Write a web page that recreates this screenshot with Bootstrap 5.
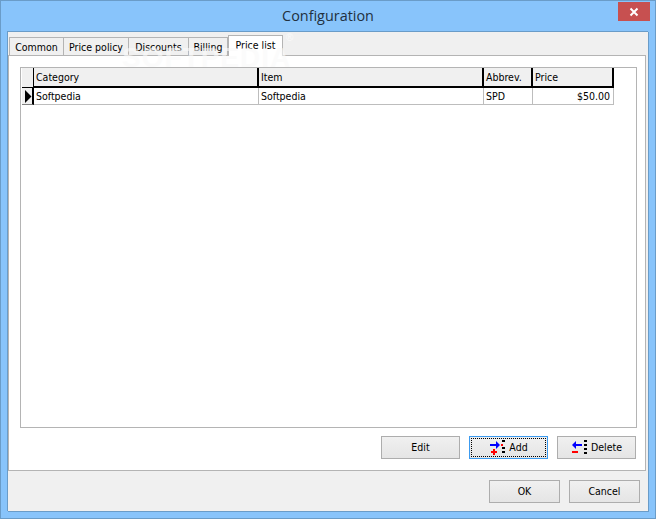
<!DOCTYPE html>
<html lang="en">
<head>
<meta charset="utf-8">
<title>Configuration</title>
<link href="https://cdn.jsdelivr.net/npm/bootstrap@5.3.0/dist/css/bootstrap.min.css" rel="stylesheet">
<style>
html,body{margin:0;height:519px;overflow:hidden;background:#88c4fb}
body{font-family:"DejaVu Sans Condensed","Liberation Sans",sans-serif;font-size:10.5px;color:#000}
.win{width:656px;height:519px;border:1px solid #6a9cc8;background:#88c4fb;position:relative}
.titlebar{height:30px;position:relative}
.wintitle{font-family:"Open Sans",sans-serif;font-size:14.4px;color:#22303e;line-height:30px;text-align:center}
.closebtn{position:absolute;top:1px;right:5px;width:32px;height:19px;background:#c75050;display:flex;align-items:center;justify-content:center}
.client{margin-left:6px;width:641px;height:480px;border:1px solid #6a9cc8;border-width:1px 0 0 1px;background:#f0f0f0;padding:3px 2px 0 0;box-shadow:1px 1px 0 #6a9cc8}
.tabstrip{height:20px;padding-left:1px;position:relative;z-index:1;align-items:flex-end}
.tabx{height:18px;border:1px solid #b4b4b4;border-bottom:0;border-right:0;padding:0;text-align:center;line-height:19px;background:#f0f0f0}
.tabx:nth-child(4){border-right:1px solid #b4b4b4}
.tabx.on{height:21px;background:#fff;margin-bottom:-1px;border:1px solid #b4b4b4;border-bottom:0;line-height:19px}
.tabpanel{width:638px;height:416px;background:#fff;border:1px solid #b4b4b4;padding:11px 8px 8px 11px;position:relative}
.gridbox{width:617px;height:361px;border:1px solid #b4b4b4;padding:0 0 0 1px}
.tbl{table-layout:fixed;border-collapse:separate;border-spacing:0;width:592px;margin:0;font-size:10.5px}
.tbl th{font-weight:400;background:#f0f0f0;height:20px;padding:0 0 0 2px;border-right:2px solid #000;border-bottom:2px solid #000;line-height:17px;white-space:nowrap;overflow:hidden;vertical-align:middle}
.tbl th:first-child{border-right:1px solid #000;border-bottom:1px solid #000}
.tbl td{height:17px;padding:0 0 0 2px;border-right:1px solid #bdbdbd;border-bottom:1px solid #bdbdbd;line-height:16px;white-space:nowrap;vertical-align:middle}
.tbl td.ind{background:#f0f0f0;border-right:2px solid #000;border-bottom:1px solid #808080;padding:0 0 0 2px}
.tbl td.amt{text-align:right;padding-right:3px}
.cmdrow{margin-top:8px;gap:9px;justify-content:flex-end;width:616px}
.wbtn{width:79px;height:23px;padding:0;border:1px solid #adadad;border-radius:0;background:linear-gradient(#f0f0f0,#e5e5e5);font-size:10.5px;color:#000;display:flex;align-items:center;justify-content:center;gap:3px;line-height:1}
.wbtn.sel{border-color:#3c9bf0;position:relative}
.wbtn.sel::after{content:"";position:absolute;inset:1px;border:1px dotted #000}
.foot{padding:9px 6px 0 0;gap:9px;justify-content:flex-end}
.foot .wbtn{width:71px}
.wmk{position:absolute;left:121px;top:43px;font-family:"Liberation Sans",sans-serif;font-weight:700;font-size:28px;letter-spacing:1px;color:#fafafa;opacity:.6;line-height:1;z-index:2;pointer-events:none}
.wreg{position:absolute;left:285px;top:32px;font-family:"Liberation Sans",sans-serif;font-size:10px;color:#fafafa;z-index:2;line-height:1}
</style>
</head>
<body>
<div class="win">
  <div class="titlebar">
    <div class="wintitle">Configuration</div>
    <div class="closebtn"><svg width="10" height="10" viewBox="0 0 10 10"><path d="M1.5 1.5l7 7M8.500 1.500l-7 7" stroke="#fff" stroke-width="2"/></svg></div>
  </div>
  <div class="client">
    <div class="tabstrip d-flex">
      <div class="tabx" style="width:54px">Common</div>
      <div class="tabx" style="width:65px">Price policy</div>
      <div class="tabx" style="width:60px">Discounts</div>
      <div class="tabx" style="width:40px">Billing</div>
      <div class="tabx on" style="width:55px">Price list</div>
    </div>
    <div class="tabpanel">
      <div class="gridbox">
        <table class="tbl">
          <colgroup><col style="width:12px"><col style="width:225px"><col style="width:225px"><col style="width:49px"><col style="width:81px"></colgroup>
          <thead><tr><th></th><th>Category</th><th>Item</th><th>Abbrev.</th><th>Price</th></tr></thead>
          <tbody><tr><td class="ind"><svg width="8" height="13" viewBox="0 0 8 13" class="d-block"><path d="M1 0l6.500 6.500-6.500 6.500z" fill="#000"/></svg></td><td>Softpedia</td><td>Softpedia</td><td>SPD</td><td class="amt">$50.00</td></tr></tbody>
        </table>
      </div>
      <div class="cmdrow d-flex">
        <button type="button" class="btn wbtn">Edit</button>
        <button type="button" class="btn wbtn sel"><svg width="17" height="16" viewBox="0 0 17 16"><path d="M1 4h7v2H1z" fill="#00f"/><path d="M7 1l4 4-4 4z" fill="#00f"/><path d="M12 4h2v2h-2z" fill="#f00"/><path d="M13 0h3v2h-3zM13 7h3v2h-3zM13 11h3v2h-3z" fill="#000"/><path d="M4 9h2v2h2v2H6v2H4v-2H2v-2h2z" fill="#f00"/></svg>Add</button>
        <button type="button" class="btn wbtn"><svg width="17" height="16" viewBox="0 0 17 16"><path d="M4 4h7v2H4z" fill="#00f"/><path d="M5 1L1 5l4 4z" fill="#00f"/><path d="M1 11h6v2H1z" fill="#f00"/><path d="M13 0h3v2h-3zM13 4h3v2h-3zM13 8h3v2h-3zM13 12h3v2h-3z" fill="#000"/></svg>Delete</button>
      </div>
    </div>
    <div class="foot d-flex">
      <button type="button" class="btn wbtn">OK</button>
      <button type="button" class="btn wbtn">Cancel</button>
    </div>
  </div>
  <div class="wmk">SOFTPEDIA</div>
  <div class="wreg">®</div>
</div>
</body>
</html>
